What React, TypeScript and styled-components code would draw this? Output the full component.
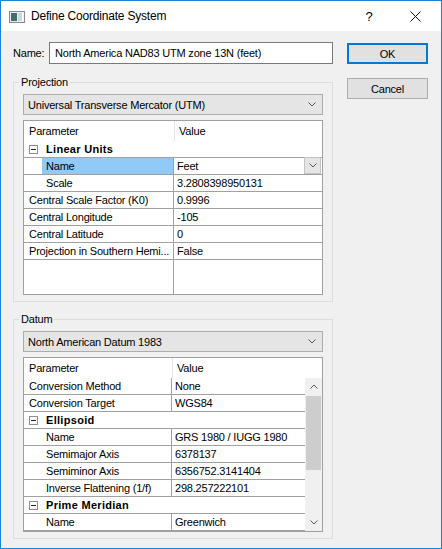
import React from "react";
import styled, { createGlobalStyle, css } from "styled-components";

type RowKind = "group" | "child" | "item";

interface PropRow {
  kind: RowKind;
  label: string;
  value?: string;
  selected?: boolean;
  combo?: boolean;
}

const projectionRows: PropRow[] = [
  { kind: "group", label: "Linear Units" },
  { kind: "child", label: "Name", value: "Feet", selected: true, combo: true },
  { kind: "child", label: "Scale", value: "3.2808398950131" },
  { kind: "item", label: "Central Scale Factor (K0)", value: "0.9996" },
  { kind: "item", label: "Central Longitude", value: "-105" },
  { kind: "item", label: "Central Latitude", value: "0" },
  { kind: "item", label: "Projection in Southern Hemi...", value: "False" },
];

const datumRows: PropRow[] = [
  { kind: "item", label: "Conversion Method", value: "None" },
  { kind: "item", label: "Conversion Target", value: "WGS84" },
  { kind: "group", label: "Ellipsoid" },
  { kind: "child", label: "Name", value: "GRS 1980 / IUGG 1980" },
  { kind: "child", label: "Semimajor Axis", value: "6378137" },
  { kind: "child", label: "Semiminor Axis", value: "6356752.3141404" },
  { kind: "child", label: "Inverse Flattening (1/f)", value: "298.257222101" },
  { kind: "group", label: "Prime Meridian" },
  { kind: "child", label: "Name", value: "Greenwich" },
];

const Chevron: React.FC<{ up?: boolean }> = ({ up }) => (
  <svg width="8" height="5" viewBox="0 0 8 5">
    <path
      d={up ? "M0.5 4.5 L4 1 L7.5 4.5" : "M0.5 0.5 L4 4 L7.5 0.5"}
      fill="none"
      stroke="#5a5a5a"
      strokeWidth="1"
    />
  </svg>
);

const Expander = () => (
  <svg width="9" height="9" viewBox="0 0 9 9">
    <rect x="0.5" y="0.5" width="8" height="8" fill="#fff" stroke="#8f8f8f" />
    <path d="M2 4.5 H7" stroke="#222" strokeWidth="1" />
  </svg>
);

const PropertyTable: React.FC<{ rows: PropRow[]; paramWidth: number; scroll?: boolean }> = ({
  rows,
  paramWidth,
  scroll,
}) => (
  <Table>
    <HeaderRow>
      <HeaderCell style={{ width: paramWidth + 1 }}>Parameter</HeaderCell>
      <HeaderValue>Value</HeaderValue>
    </HeaderRow>
    <TableBody>
      <Rows>
        {rows.map((row, i) =>
          row.kind === "group" ? (
            <Row key={i}>
              <GroupCell>
                <Expander />
                <GroupLabel>{row.label}</GroupLabel>
              </GroupCell>
            </Row>
          ) : (
            <Row key={i}>
              <ParamCell style={{ width: paramWidth }}>
                {row.kind === "child" && <Indent />}
                <ParamText $child={row.kind === "child"} $selected={row.selected}>
                  {row.label}
                </ParamText>
              </ParamCell>
              <ValueCell>
                <ValueText>{row.value}</ValueText>
                {row.combo && (
                  <CellButton>
                    <Chevron />
                  </CellButton>
                )}
              </ValueCell>
            </Row>
          )
        )}
        <Filler>
          <FillerParam style={{ width: paramWidth }} />
        </Filler>
      </Rows>
      {scroll && (
        <ScrollBar>
          <ScrollArrow>
            <Chevron up />
          </ScrollArrow>
          <ScrollTrack>
            <ScrollThumb />
          </ScrollTrack>
          <ScrollArrow>
            <Chevron />
          </ScrollArrow>
        </ScrollBar>
      )}
    </TableBody>
  </Table>
);

const App: React.FC = () => (
  <>
    <GlobalStyle />
    <Window>
      <TitleBar>
        <AppIcon viewBox="0 0 16 12" width="16" height="12">
          <rect x="0.5" y="0.5" width="15" height="11" fill="#e9eef2" stroke="#8a8a8a" />
          <rect x="2" y="2" width="6" height="8" fill="#3f6f6c" />
          <rect x="9" y="2" width="4" height="8" fill="#c9d8e4" />
          <rect x="13" y="2" width="1.5" height="8" fill="#ffffff" />
        </AppIcon>
        <TitleText>Define Coordinate System</TitleText>
        <CaptionButton>?</CaptionButton>
        <CaptionButton>
          <svg width="11" height="11" viewBox="0 0 11 11">
            <path d="M0.5 0.5 L10.5 10.5 M10.5 0.5 L0.5 10.5" stroke="#111" strokeWidth="1" />
          </svg>
        </CaptionButton>
      </TitleBar>
      <Body>
        <MainColumn>
          <NameRow>
            <NameLabel>Name:</NameLabel>
            <NameInput readOnly value="North America NAD83 UTM zone 13N (feet)" />
          </NameRow>
          <Group>
            <Legend>Projection</Legend>
            <Combo>
              <span>Universal Transverse Mercator (UTM)</span>
              <Chevron />
            </Combo>
            <PropertyTable rows={projectionRows} paramWidth={150} />
          </Group>
          <Group $gap>
            <Legend>Datum</Legend>
            <Combo>
              <span>North American Datum 1983</span>
              <Chevron />
            </Combo>
            <PropertyTable rows={datumRows} paramWidth={148} scroll />
          </Group>
        </MainColumn>
        <ButtonColumn>
          <PushButton $default>OK</PushButton>
          <PushButton>Cancel</PushButton>
        </ButtonColumn>
      </Body>
    </Window>
  </>
);

const GlobalStyle = createGlobalStyle`
  html, body {
    margin: 0;
    padding: 0;
    background: #ffffff;
  }
  * {
    box-sizing: border-box;
  }
  body {
    font-family: "Liberation Sans", Arial, sans-serif;
    font-size: 11px;
    letter-spacing: -0.2px;
    color: #000;
  }
`;

const Window = styled.div`
  width: 442px;
  height: 549px;
  border: 1px solid #1883d7;
  display: flex;
  flex-direction: column;
  background: #f0f0f0;
`;

const TitleBar = styled.div`
  height: 30px;
  background: #ffffff;
  display: flex;
  align-items: center;
  padding: 0 3px 0 8px;
`;

const AppIcon = styled.svg`
  flex: none;
  margin-top: 1px;
`;

const TitleText = styled.div`
  flex: 1;
  margin-left: 6px;
  font-size: 12px;
`;

const CaptionButton = styled.div`
  width: 46px;
  height: 30px;
  display: flex;
  align-items: center;
  justify-content: center;
  font-size: 13px;
`;

const Body = styled.div`
  flex: 1;
  display: flex;
  gap: 14px;
  padding: 11px 13px 9px 11px;
`;

const MainColumn = styled.div`
  width: 321px;
  display: flex;
  flex-direction: column;
`;

const NameRow = styled.div`
  display: flex;
  align-items: center;
  height: 22px;
`;

const NameLabel = styled.div`
  width: 37px;
  padding-left: 1px;
`;

const NameInput = styled.input`
  width: 284px;
  height: 22px;
  border: 1px solid #7a7a7a;
  background: #fff;
  padding: 0 5px;
  font: inherit;
  letter-spacing: inherit;
  color: #000;
  outline: none;
`;

const Group = styled.fieldset<{ $gap?: boolean }>`
  margin: 10px 0 0 1px;
  padding: 0 9px 6px 9px;
  border: 1px solid #dcdcdc;
  min-width: 0;
  ${(p) =>
    p.$gap &&
    css`
      margin-top: 9px;
    `}
`;

const Legend = styled.legend`
  padding: 0 2px;
  margin-left: -4px;
  line-height: 16px;
`;

const Combo = styled.div`
  margin-top: 4px;
  height: 21px;
  display: flex;
  align-items: center;
  justify-content: space-between;
  padding: 0 6px 0 4px;
  background: #e5e5e5;
  border: 1px solid #adadad;
`;

const Table = styled.div`
  margin-top: 5px;
  height: 175px;
  border: 1px solid #a0a0a0;
  background: #ffffff;
  display: flex;
  flex-direction: column;
`;

const HeaderRow = styled.div`
  height: 20px;
  display: flex;
  flex: none;
`;

const HeaderCell = styled.div`
  padding: 2px 0 0 5px;
  border-right: 1px solid #e3e3e3;
  line-height: 16px;
`;

const HeaderValue = styled.div`
  padding: 2px 0 0 4px;
  line-height: 16px;
`;

const TableBody = styled.div`
  flex: 1;
  display: flex;
  min-height: 0;
`;

const Rows = styled.div`
  flex: 1;
  display: flex;
  flex-direction: column;
  overflow: hidden;
`;

const Row = styled.div`
  flex: none;
  height: 17px;
  display: flex;
  border-bottom: 1px solid #a0a0a0;
  line-height: 16px;
`;

const GroupCell = styled.div`
  flex: 1;
  display: flex;
  align-items: center;
  padding-left: 5px;
`;

const GroupLabel = styled.span`
  margin-left: 8px;
  font-weight: 700;
  letter-spacing: 0.3px;
`;

const ParamCell = styled.div`
  flex: none;
  display: flex;
  border-right: 1px solid #a0a0a0;
  min-width: 0;
`;

const Indent = styled.div`
  width: 18px;
  flex: none;
`;

const ParamText = styled.div<{ $child?: boolean; $selected?: boolean }>`
  flex: 1;
  min-width: 0;
  padding-left: ${(p) => (p.$child ? "4px" : "5px")};
  white-space: nowrap;
  overflow: hidden;
  background: ${(p) => (p.$selected ? "#91c9f7" : "transparent")};
`;

const ValueCell = styled.div`
  flex: 1;
  display: flex;
  min-width: 0;
  padding-left: 3px;
`;

const ValueText = styled.div`
  flex: 1;
  white-space: nowrap;
  overflow: hidden;
`;

const CellButton = styled.div`
  width: 17px;
  height: 17px;
  margin: -1px 1px 0 0;
  display: flex;
  align-items: center;
  justify-content: center;
  background: #e5e5e5;
  border: 1px solid #c4c4c4;
`;

const Filler = styled.div`
  flex: 1;
  display: flex;
`;

const FillerParam = styled.div`
  border-right: 1px solid #a0a0a0;
`;

const ScrollBar = styled.div`
  width: 17px;
  flex: none;
  display: flex;
  flex-direction: column;
  background: #f0f0f0;
`;

const ScrollArrow = styled.div`
  height: 17px;
  flex: none;
  display: flex;
  align-items: center;
  justify-content: center;
`;

const ScrollTrack = styled.div`
  flex: 1;
  padding: 1px 1px 0 1px;
`;

const ScrollThumb = styled.div`
  height: 74px;
  background: #cdcdcd;
`;

const ButtonColumn = styled.div`
  width: 82px;
  display: flex;
  flex-direction: column;
  gap: 14px;
  padding-top: 1px;
`;

const PushButton = styled.div<{ $default?: boolean }>`
  height: 21px;
  display: flex;
  align-items: center;
  justify-content: center;
  background: #e1e1e1;
  border: ${(p) => (p.$default ? "2px solid #0078d7" : "1px solid #adadad")};
`;

export default App;
